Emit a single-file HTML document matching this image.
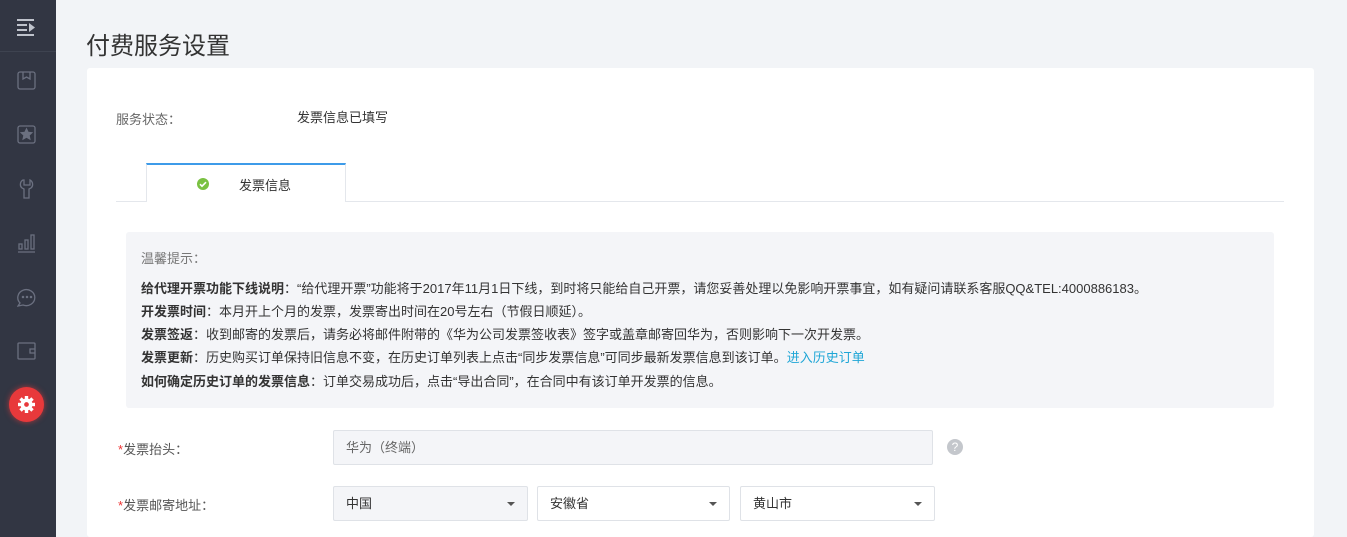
<!DOCTYPE html>
<html><head><meta charset="utf-8"><style>
*{margin:0;padding:0;box-sizing:border-box}
html,body{width:1347px;height:537px;overflow:hidden}
body{background:#f2f4f7;font-family:"Liberation Sans","Noto Sans CJK SC",sans-serif;position:relative;color:#333}
.sb{position:absolute;left:0;top:0;width:56px;height:537px;background:#323643}
.sb .top{height:52px;border-bottom:1px solid #3e4350}
.ic{position:absolute;left:17px;width:20px;height:20px}
.gear{position:absolute;left:9px;top:387px;width:35px;height:35px;border-radius:50%;background:#e8393b;box-shadow:0 0 6px rgba(232,57,59,.7)}
h1{position:absolute;left:86px;top:26px;font-size:24px;font-weight:normal;color:#333}
.card{position:absolute;left:87px;top:68px;width:1227px;height:469px;background:#fff;border-radius:3px}
.abs{position:absolute}
.notice{position:absolute;left:126px;top:232px;width:1148px;height:176px;background:#f4f5f8;border-radius:3px;font-size:13px;color:#333}
.notice p{position:absolute;left:15px;white-space:nowrap}
b{font-weight:bold}
.in{position:absolute;height:35px;border:1px solid #dfe2e7;border-radius:2px;font-size:13px;line-height:33px;padding-left:12px;color:#333}
.in .ar{position:absolute;right:12px;top:15px;border:4px solid transparent;border-top:4px solid #555;border-bottom:0}
.lbl{position:absolute;font-size:13px;color:#555}
.lbl i{color:#e33;font-style:normal}
</style></head><body>
<div class="sb"><div class="top"></div>
<svg class="ic" style="top:17px" viewBox="0 0 20 20" fill="#bfc3cc"><rect x="0" y="2" width="17" height="2"/><rect x="0" y="7" width="10" height="2"/><rect x="0" y="12" width="10" height="2"/><rect x="0" y="17" width="17" height="2"/><path d="M12 6l6 4.5-6 4.5z"/></svg>
<svg class="ic" style="top:71px" viewBox="0 0 20 20" fill="none" stroke="#6b7080" stroke-width="1.3"><rect x="1" y="1" width="17" height="17" rx="2"/><path d="M6 1v7l3.5-2 3.5 2V1"/></svg>
<svg class="ic" style="top:125px" viewBox="0 0 20 20" fill="none" stroke="#6b7080" stroke-width="1.3"><rect x="1" y="1" width="17" height="17" rx="2"/><path d="M9.5 4l1.6 3.4 3.6.4-2.7 2.5.8 3.6-3.3-1.9-3.3 1.9.8-3.6-2.7-2.5 3.6-.4z" fill="#6b7080"/></svg>
<svg class="ic" style="top:179px" viewBox="0 0 20 20" fill="none" stroke="#6b7080" stroke-width="1.3"><path d="M6 1C3 2.5 2.5 7 5 9l2 1v9h5v-9l2-1c2.5-2 2-6.5-1-8v5H7V1z"/></svg>
<svg class="ic" style="top:233px" viewBox="0 0 20 20" fill="none" stroke="#6b7080" stroke-width="1.3"><path d="M1 19h17"/><rect x="2" y="11" width="3" height="5"/><rect x="8" y="7" width="3" height="9"/><rect x="14" y="2" width="3" height="14"/></svg>
<svg class="ic" style="top:287px" viewBox="0 0 20 20" fill="none" stroke="#6b7080" stroke-width="1.3"><path d="M3 16A8.5 8 0 1 1 6 18L1 19z"/><circle cx="6" cy="10" r=".6" fill="#6b7080"/><circle cx="10" cy="10" r=".6" fill="#6b7080"/><circle cx="14" cy="10" r=".6" fill="#6b7080"/></svg>
<svg class="ic" style="top:341px" viewBox="0 0 20 20" fill="none" stroke="#6b7080" stroke-width="1.3"><rect x="1" y="2" width="17" height="16" rx="1"/><path d="M18 8h-5v4h5"/></svg>
<div class="gear"><svg style="position:absolute;left:9px;top:9px" width="17" height="17" viewBox="0 0 20 20"><g fill="#fff"><rect x="8" y="0" width="4" height="20"/><rect x="0" y="8" width="20" height="4"/><rect x="8" y="0" width="4" height="20" transform="rotate(45 10 10)"/><rect x="8" y="0" width="4" height="20" transform="rotate(-45 10 10)"/><circle cx="10" cy="10" r="7"/></g><circle cx="10" cy="10" r="2.8" fill="#e8393b"/></svg></div>
</div>
<h1>付费服务设置</h1>
<div class="card"></div>
<div class="abs" style="left:116px;top:109px;font-size:13px;color:#666">服务状态：</div>
<div class="abs" style="left:297px;top:107px;font-size:13px;color:#333">发票信息已填写</div>
<div class="abs" style="left:116px;top:201px;width:1168px;height:1px;background:#e4e7ec"></div>
<div class="abs" style="left:146px;top:163px;width:200px;height:39px;background:#fff;border:1px solid #e4e7ec;border-top:2px solid #3d9be9;border-bottom:none"></div>
<div class="abs" style="left:197px;top:178px;width:12px;height:12px;border-radius:50%;background:#7ac142"><svg width="12" height="12" viewBox="0 0 12 12" style="position:absolute;left:0;top:0"><path d="M3 6.2l2 2 4-4" fill="none" stroke="#fff" stroke-width="1.6"/></svg></div>
<div class="abs" style="left:239px;top:175px;font-size:13px;color:#333">发票信息</div>
<div class="notice">
<p style="top:16px;color:#777">温馨提示：</p>
<p style="top:46px"><b>给代理开票功能下线说明</b>：“给代理开票”功能将于2017年11月1日下线，到时将只能给自己开票，请您妥善处理以免影响开票事宜，如有疑问请联系客服QQ&amp;TEL:4000886183。</p>
<p style="top:69px"><b>开发票时间</b>：本月开上个月的发票，发票寄出时间在20号左右（节假日顺延）。</p>
<p style="top:92px"><b>发票签返</b>：收到邮寄的发票后，请务必将邮件附带的《华为公司发票签收表》签字或盖章邮寄回华为，否则影响下一次开发票。</p>
<p style="top:115px"><b>发票更新</b>：历史购买订单保持旧信息不变，在历史订单列表上点击“同步发票信息”可同步最新发票信息到该订单。<span style="color:#1fa6d6">进入历史订单</span></p>
<p style="top:139px"><b>如何确定历史订单的发票信息</b>：订单交易成功后，点击“导出合同”，在合同中有该订单开发票的信息。</p>
</div>
<div class="lbl" style="left:118px;top:439px"><i>*</i>发票抬头：</div>
<div class="in" style="left:333px;top:430px;width:600px;background:#f4f5f8;color:#666">华为（终端）</div>
<div class="abs" style="left:947px;top:439px;width:16px;height:16px;border-radius:50%;background:#c4c7cc;color:#fff;font-size:12px;text-align:center;line-height:16px">?</div>
<div class="lbl" style="left:118px;top:495px"><i>*</i>发票邮寄地址：</div>
<div class="in" style="left:333px;top:486px;width:195px;background:#f4f5f8">中国<span class="ar"></span></div>
<div class="in" style="left:537px;top:486px;width:193px;background:#fff">安徽省<span class="ar"></span></div>
<div class="in" style="left:740px;top:486px;width:195px;background:#fff">黄山市<span class="ar"></span></div>
</body></html>
